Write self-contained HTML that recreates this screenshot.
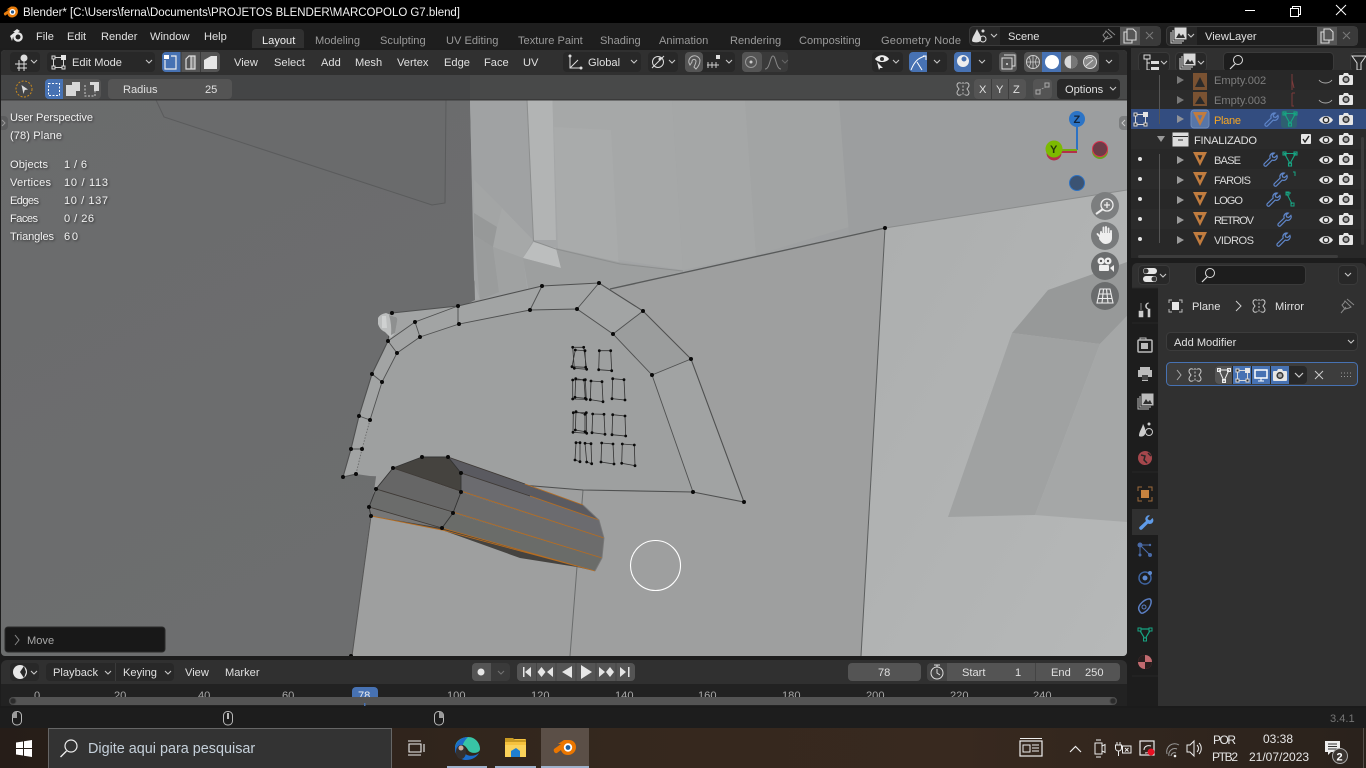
<!DOCTYPE html>
<html><head><meta charset="utf-8"><title>Blender</title>
<style>
html,body{margin:0;padding:0;background:#000;overflow:hidden}
svg{display:block;position:absolute;left:0;top:0}
text{font-family:"Liberation Sans","DejaVu Sans",sans-serif;font-size:11.1px;fill:#d8d8d8}
.m{fill:#e0e0e0}.tab{fill:#9a9a9a}
.ov{fill:#f2f2f2;font-size:11.1px;filter:drop-shadow(1px 1px 1px rgba(0,0,0,.55))}
.dim{fill:#7c7c7c}
.g{fill:#a8a8a8}
.tb{fill:#e6e6e6;font-size:12px}
</style></head><body>
<svg width="1366" height="768" viewBox="0 0 1366 768" xmlns="http://www.w3.org/2000/svg">
<defs>
<linearGradient id="task" x1="0" x2="1" y1="0" y2="0"><stop offset="0" stop-color="#261d18"/><stop offset=".45" stop-color="#35281e"/><stop offset=".7" stop-color="#38291f"/><stop offset="1" stop-color="#2a221c"/></linearGradient>
<linearGradient id="wall" x1="0" x2="1" y1="0" y2="0"><stop offset="0" stop-color="#a6a8a9"/><stop offset="1" stop-color="#989a9b"/></linearGradient>
<linearGradient id="dk" x1="0" x2="1" y1="0" y2="1"><stop offset="0" stop-color="#6a6b6c"/><stop offset="1" stop-color="#6f7071"/></linearGradient>
<linearGradient id="rp" x1="0" x2="1" y1="0" y2="1"><stop offset="0" stop-color="#acaeae"/><stop offset="1" stop-color="#b6b8b8"/></linearGradient>
<g id="eye"><path d="M0 6C3 .8 11 .8 14 6 11 11.2 3 11.2 0 6Z" fill="#e6e6e6"/><circle cx="7" cy="6" r="3.4" fill="#2a2a2a"/><circle cx="7" cy="6" r="2" fill="#e6e6e6"/></g>
<g id="cam"><path d="M1 2h3l1-2h4l1 2h3a1 1 0 0 1 1 1v8a1 1 0 0 1-1 1H1a1 1 0 0 1-1-1V3a1 1 0 0 1 1-1Z" fill="#e6e6e6"/><circle cx="7" cy="6.5" r="3.6" fill="#3a3a3a"/><circle cx="7" cy="6.5" r="2" fill="#aaa"/></g>
<path id="obj" d="M0 0H14L7 14ZM4.600 3.200 7 8.400 9.400 3.200Z" fill="#c17c3f" fill-rule="evenodd"/>
<path id="wr" d="M10.5 1A3.6 3.6 0 0 0 7.2 6L1.4 11.6A1.5 1.5 0 0 0 3.5 13.8L9.2 8.1A3.6 3.6 0 0 0 13.9 3.4L11.7 5.5 9.7 5 9.1 3.1 11.3 1.1A3.6 3.6 0 0 0 10.5 1Z" fill="none" stroke="#5f86c9" stroke-width="1.2"/>
<g id="mesh" fill="none" stroke="#17a583" stroke-width="1.1"><path d="M1.5 1.5H12.5L7 11.5Z"/><rect x="0" y="0" width="3" height="3"/><rect x="11" y="0" width="3" height="3"/><rect x="5.5" y="11" width="3" height="3"/></g>
<g id="edit" fill="none" stroke="#d8d8d8" stroke-width="1"><rect x="1.5" y="1.5" width="10" height="10"/><rect x="0" y="0" width="3" height="3" fill="#303030"/><rect x="0" y="10" width="3" height="3" fill="#303030"/><rect x="10" y="10" width="3" height="3" fill="#303030"/><rect x="9" y="-1" width="5" height="5" fill="#e6e6e6" stroke="none"/></g>
<path id="cv" d="M0 0 3 3 6 0" fill="none" stroke="#c8c8c8" stroke-width="1.1"/>
<path id="ar" d="M0 0 7 4 0 8Z" fill="#9a9a9a"/>
<g id="imgs" fill="none" stroke="#d8d8d8" stroke-width="1"><rect x="4" y="0" width="11" height="11" fill="#d8d8d8"/><path d="M5 10 8 5 10 8 12 6 14 10Z" fill="#303030" stroke="none"/><path d="M2 2V13H13M0 4V15H11"/></g>
<g id="bfly" fill="none" stroke="#c8c8c8" stroke-width="1"><path d="M5.500 1.500C3 0 1 1 1 3.500 1 5 2.500 6 3 7 2.500 8 1 9 1 10.500 1 13 3 14 5.500 12.500M8.500 1.500C11 0 13 1 13 3.500 13 5 11.500 6 11 7 11.500 8 13 9 13 10.500 13 13 11 14 8.500 12.500"/><path d="M7 0V14" stroke-dasharray="2 1.500"/></g>
<g id="cp" fill="none" stroke="#d8d8d8" stroke-width="1.1"><path d="M4 0H10L13 3V11H4Z"/><path d="M4 3H1V14H9V11"/></g>
<g id="mouse" fill="none" stroke="#b8b8b8" stroke-width="1"><rect x=".5" y=".5" width="9" height="13.5" rx="4"/></g>
</defs>

<!-- base -->
<rect width="1366" height="768" fill="#1d1d1d"/>
<rect width="1366" height="23" fill="#000"/>
<!-- title bar -->
<g transform="translate(3,5)"><path d="M1 8 6 4.5H3.5L8 1.5H10.5C13 1.5 15 3.5 15 6.5 15 10 12 12.5 9 12.5 6.500 12.500 5 11 4.500 9L2.500 10.500C1.500 11 .5 9 1 8Z" fill="#e87d0d"/><circle cx="9.500" cy="7" r="3" fill="#fff"/><circle cx="9.500" cy="7" r="1.600" fill="#26588c"/></g>
<text x="23" y="16" textLength="437" style="font-size:11.5px;fill:#f2f2f2">Blender* [C:\Users\ferna\Documents\PROJETOS BLENDER\MARCOPOLO G7.blend]</text>
<path d="M1245 10.500h10" stroke="#fff"/>
<path d="M1290.500 8.500h8v8h-8zM1292.500 8.500v-2h8v8h-2" fill="none" stroke="#fff"/>
<path d="M1336 5 1346 15M1346 5 1336 15" stroke="#fff"/>

<!-- topbar -->
<rect y="23" width="1366" height="25" fill="#1e1e1e"/>
<g transform="translate(10,29)"><circle cx="8" cy="8" r="4.800" fill="#e6e6e6"/><circle cx="8" cy="8" r="2.500" fill="#1e1e1e"/><path d="M0 7 5 3H3L7 0 10 2 7 4 3 8 2 12 1 9Z" fill="#e6e6e6"/></g>
<text class="m" x="36" y="40">File</text><text class="m" x="67" y="40">Edit</text><text class="m" x="101" y="40">Render</text><text class="m" x="150" y="40">Window</text><text class="m" x="204" y="40">Help</text>
<path d="M252 48V33a4 4 0 0 1 4-4h44a4 4 0 0 1 4 4v15Z" fill="#303030"/>
<text x="262" y="44" style="fill:#eee">Layout</text>
<text class="tab" x="315" y="44">Modeling</text><text class="tab" x="380" y="44">Sculpting</text><text class="tab" x="446" y="44">UV Editing</text><text class="tab" x="518" y="44">Texture Paint</text><text class="tab" x="600" y="44">Shading</text><text class="tab" x="659" y="44">Animation</text><text class="tab" x="730" y="44">Rendering</text><text class="tab" x="799" y="44">Compositing</text><text class="tab" x="881" y="44" textLength="80">Geometry Node</text>

<!-- scene -->
<rect x="969.500" y="26.500" width="191" height="19" rx="4" fill="#282828" stroke="#3b3b3b"/>
<rect x="1000" y="27" width="120" height="18" fill="#1d1d1d"/>
<rect x="1120" y="27" width="20" height="18" fill="#565656"/><rect x="1140" y="27" width="20" height="18" fill="#3a3a3a"/>
<path d="M972 41C972 37 975 34 977 29 979 34 982 36 981 40 980 43 973 43 972 41Z" fill="#ddd"/><circle cx="983" cy="39" r="3" fill="none" stroke="#ddd"/><circle cx="983" cy="31" r="1.500" fill="#ddd"/>
<use href="#cv" x="991" y="34"/>
<text class="m" x="1008" y="40">Scene</text>
<path d="M1103 42 1108 36M1106 31 1112 37 1110 38 1106 39 1103 35 1105 33ZM1108 29 1115 35" fill="none" stroke="#888"/>
<use href="#cp" transform="translate(1123,29)"/>
<path d="M1146 32 1153 39M1153 32 1146 39" stroke="#777" stroke-width="1.100"/>
<rect x="1166.500" y="26.500" width="191" height="19" rx="4" fill="#282828" stroke="#3b3b3b"/>
<rect x="1197" y="27" width="120" height="18" fill="#1d1d1d"/>
<rect x="1317" y="27" width="20" height="18" fill="#565656"/><rect x="1337" y="27" width="20" height="18" fill="#3a3a3a"/>
<use href="#imgs" transform="translate(1171,28)"/><use href="#cv" x="1188" y="34"/>
<text class="m" x="1205" y="40">ViewLayer</text>
<use href="#cp" transform="translate(1320,29)"/>
<path d="M1343 32 1350 39M1350 32 1343 39" stroke="#777" stroke-width="1.100"/>

<!-- viewport -->
<clipPath id="vp"><path d="M1 54a4 4 0 0 1 4-4H1123a4 4 0 0 1 4 4V652a4 4 0 0 1-4 4H5a4 4 0 0 1-4-4Z"/></clipPath>
<g clip-path="url(#vp)">
<rect x="0" y="50" width="1130" height="610" fill="url(#dk)"/>
<path d="M156 100 164 117 432 205 445 203 446 100" fill="#6a6b6c" stroke="#5a5b5c" stroke-width="1"/>
<path d="M470 100H1127V300H475Z" fill="url(#wall)"/>
<path d="M470 100H527L533 240 534 252 523 258 527 290 480 300 474 280Z" fill="#a0a2a3"/>
<path d="M474 180 502 208 533 240 497 227 493 247 474 213Z" fill="#a3a5a5"/>
<path d="M474 213 497 227 493 247 474 235Z" fill="#979999"/>
<path d="M502 208 533 240 523 258 493 247 497 227Z" fill="#a6a8a8"/>
<path d="M474 235 493 247 499 292 480 300Z" fill="#9a9c9c"/>
<path d="M493 247 523 258 527 288 499 292Z" fill="#a0a2a2"/>
<path d="M527.500 100H552.500L556 240 533.500 240Z" fill="#b2b4b4"/>
<path d="M552.500 100H672L683 270 558 250Z" fill="#a6a8a8"/>
<path d="M554 127 611 130 618.500 262 558 250Z" fill="#a9abab"/>
<path d="M672 100H745L756 255 683 270Z" fill="#a5a7a7"/>
<path d="M745 100H839L849 227 756 255Z" fill="#a2a4a4"/>
<path d="M839 100H1127V190L849 234Z" fill="#9c9e9f"/>
<path d="M533.500 242 556 248 561 268 523 258Z" fill="#bcbebe"/>
<path d="M556 248 618 262 683 271 610 290 530 300 523 258 561 268Z" fill="#9d9f9f"/>
<path d="M533.500 241 556 249 620 264 683 271" fill="none" stroke="#8d8f8f"/>
<path d="M527 100 533.500 241" stroke="#8c8e8e" fill="none"/>
<!-- lower panels -->
<path d="M475 300 610 289 885 228 861 656H352L370 520 395 340Z" fill="#9e9f9f"/>
<path d="M885 228 1127 190V656H861Z" fill="url(#rp)"/>
<path d="M1012 333 1048 290 1127 262V316L1100 344Z" fill="#979999"/>
<path d="M1012 333 1100 344 1035 515 948 517Z" fill="#a0a2a2"/>
<path d="M1100 344 1127 316V522L1035 515Z" fill="#a5a7a7"/>
<path d="M885 228 861 656" stroke="#5c5e5e" fill="none"/>
<path d="M885 228 1127 190" stroke="#8a8c8c" fill="none"/>
<path d="M610 289 885 228" stroke="#585a5a" stroke-width="1.400" fill="none"/>
<path d="M371 516 352 656" stroke="#555" fill="none"/>
<path d="M583 490 570 656" stroke="#6a6c6c" fill="none"/>
<!-- mesh -->
<path d="M392 313 458 306 542 286 599 283 643 311 691 359 744 502 693 492 583 490 460 480 370 476 356 474 343 477 372 374 388 341Z" fill="#9ea0a0"/>
<path d="M392 313 458 306 542 286 599 283 643 311 691 359 652 375 613 334 577 309 530 310 459 324 420 337 397 353 382 382 370 420 362 449 356 474 343 477 351 449 359 416 372 374 388 341Z" fill="#a2a4a4"/>
<path d="M613 334 643 311 691 359 652 375Z" fill="#9b9d9d"/>
<path d="M652 375 691 359 744 502 693 492Z" fill="#a1a3a3"/>
<g fill="none" stroke="#4f5050" stroke-width=".9">
<path d="M392 313 458 306 542 286 599 283 643 311 691 359 744 502 693 492 583 490 460 480 395 477M356 474 343 477 351 449 359 416 372 374 388 341 392 313" stroke-width="1.100"/>
<path d="M388 341 415 322 458 306M397 353 420 337 459 324 530 310 577 309 613 334 652 375 693 492M397 353 382 382 370 420"/>
<path d="M458 306V324M415 322 420 337M388 341 397 353M372 374 382 382M359 416 370 420M351 449H362M542 286 530 310M599 283 577 309M643 311 613 334M691 359 652 375"/>
<path d="M370 420 362 449 356 474" stroke-dasharray="1.500 1.500" stroke="#6a6b6b"/>
</g>
<!-- small cyl -->
<path d="M378 318Q380 314 386 313L396 317Q398 318 397 322L395 333 391 338 385 332Q380 330 378 324Z" fill="#bcbebe"/><path d="M389 315 396 317Q398 318 397 322L395 333 391 335Q392 325 389 315Z" fill="#8e9090"/><path d="M382 316H386L387 328H382Z" fill="#cfd1d1"/>
<!-- cylinder -->
<path d="M371 516 442 530 520 558 577 567 595 571 442 528 369 507Z" fill="#454340"/>
<path d="M448 457 583 505 599 520 461 473Z" fill="#5a5a60"/>
<path d="M461 473 599 520 604 538 461 492Z" fill="#6b6b6f"/>
<path d="M461 492 604 538 602 558 453 513Z" fill="#6c6c6c"/>
<path d="M453 513 602 558 595 571 442 528Z" fill="#6a6c69"/>
<path d="M393 468 422 457 448 457 461 473 461 492Z" fill="#45433f"/>
<path d="M393 468 461 492 453 513 376 489Z" fill="#666666"/>
<path d="M376 489 453 513 442 528 369 507Z" fill="#6b6c6b"/>
<path d="M369 507 442 528 371 516Z" fill="#777"/>
<g fill="none" stroke-width=".9">
<path d="M393 468 461 491M376 489 453 512M369 507 442 528M461 473 530 496M448 457 525 484" stroke="#3f3a36"/>
<path d="M461 491 604 538M453 512 602 558M442 528 595 571M530 496 599 520M525 484 583 505M371 516 442 530 595 571" stroke="#b56d22"/>
<path d="M583 505 599 520 604 538 602 558 595 571" stroke="#7a7a7a"/>
<path d="M422 457H448L461 473V492L453 513 442 528M393 468 422 457M376 489 393 468M369 507 376 489M371 516 369 507" stroke="#333"/>
</g>
<!-- windows -->
<g fill="none" stroke="#333" stroke-width=".8">
<path d="M572.700 347.300 583.700 347.300 586.700 369.300 574.300 368.300ZM575.300 350 585 350.700 585.700 367.300 572 366.700ZM599.300 350.700 610.700 350.700 611.700 370.700 598.700 369.700Z"/>
<path d="M572.700 380 585.300 379.700 586.300 399.300 572.700 399ZM575.700 378.700 584 380 585.300 398.300 575 397.300ZM591 381 602 381.700 603 401.700 590.300 399.700ZM612.700 378.700 624 379.700 625 400 612 398.700Z"/>
<path d="M573.300 412.700 586.300 412.700 586.700 433.300 573 432.300ZM576 411.700 585 414.300 585 431.700 575.300 430ZM592.700 414 604 414.300 605 434.300 592 432.700ZM612.700 414.700 625 416 625.700 436 612 434.700Z"/>
<path d="M576 442.700 580 442.700 580 461.700 575 460ZM585 443.300 591 443.700 591.700 463.700 586.700 462ZM601.700 443 613 444 614 464 601 462ZM622.300 444 634.300 445 635 465.700 621.700 463.300Z"/>
</g>
<path fill="none" stroke="#0a0a0a" stroke-width="2.800" stroke-linecap="round" d="M572.700 347.300h0M583.700 347.300h0M586.700 369.300h0M574.300 368.300h0M575.300 350h0M585 350.700h0M585.700 367.300h0M572 366.700h0M599.300 350.700h0M610.700 350.700h0M611.700 370.700h0M598.700 369.700h0M572.700 380h0M585.300 379.700h0M586.300 399.300h0M572.700 399h0M575.700 378.700h0M584 380h0M585.300 398.300h0M575 397.300h0M591 381h0M602 381.700h0M603 401.700h0M590.300 399.700h0M612.700 378.700h0M624 379.700h0M625 400h0M612 398.700h0M573.300 412.700h0M586.300 412.700h0M586.700 433.300h0M573 432.300h0M576 411.700h0M585 414.300h0M585 431.700h0M575.300 430h0M592.700 414h0M604 414.300h0M605 434.300h0M592 432.700h0M612.700 414.700h0M625 416h0M625.700 436h0M612 434.700h0M576 442.700h0M580 442.700h0M580 461.700h0M575 460h0M585 443.300h0M591 443.700h0M591.700 463.700h0M586.700 462h0M601.700 443h0M613 444h0M614 464h0M601 462h0M622.300 444h0M634.300 445h0M635 465.700h0M621.700 463.300h0"/>
<path fill="none" stroke="#0a0a0a" stroke-width="4" stroke-linecap="round" d="M885 228h0M392 313h0M458 306h0M542 286h0M599 283h0M643 311h0M691 359h0M744 502h0M693 492h0M652 375h0M613 334h0M577 309h0M530 310h0M459 324h0M420 337h0M415 322h0M388 341h0M397 353h0M382 382h0M372 374h0M370 420h0M359 416h0M362 449h0M351 449h0M356 474h0M343 477h0M422 457h0M448 457h0M461 473h0M461 492h0M453 513h0M442 528h0M393 468h0M376 489h0M369 507h0M371 516h0M351 656h0"/>
<circle cx="655.500" cy="565.500" r="25" fill="none" stroke="#fff" stroke-width="1.100"/>
<!-- overlay text -->
<text class="ov" x="10" y="121" textLength="83">User Perspective</text><text class="ov" x="10" y="139" textLength="52">(78) Plane</text>
<text class="ov" x="10" y="168" textLength="38">Objects</text><text class="ov" x="64" y="168" textLength="23">1 / 6</text>
<text class="ov" x="10" y="186" textLength="41">Vertices</text><text class="ov" x="64" y="186" textLength="44">10 / 113</text>
<text class="ov" x="10" y="204" textLength="29">Edges</text><text class="ov" x="64" y="204" textLength="44">10 / 137</text>
<text class="ov" x="10" y="222" textLength="28">Faces</text><text class="ov" x="64" y="222" textLength="30">0 / 26</text>
<text class="ov" x="10" y="240" textLength="44">Triangles</text><text class="ov" x="64" y="240" textLength="14">60</text>
<!-- side arrows -->
<path d="M0 116H4a4 4 0 0 1 4 4V126a4 4 0 0 1-4 4H0Z" fill="#5c5d5e"/><path d="M2 120 5 123 2 126" stroke="#999" fill="none"/>
<path d="M1127 116H1123a4 4 0 0 0-4 4V126a4 4 0 0 0 4 4H1127Z" fill="#7c7e7f"/><path d="M1125 120 1122 123 1125 126" stroke="#ccc" fill="none"/>
<!-- gizmo -->
<path d="M1077 119V150" stroke="#2c72c4" stroke-width="2"/><path d="M1054 152H1077" stroke="#b3304a" stroke-width="2"/><path d="M1054 150H1077" stroke="#76ab10" stroke-width="2"/>
<circle cx="1054" cy="153" r="7.500" fill="#b3304a"/><circle cx="1100" cy="151" r="8" fill="#6aa020"/>
<circle cx="1100" cy="149" r="7.500" fill="#6d3c47" stroke="#e0304f" stroke-width="1"/>
<circle cx="1077" cy="183" r="7.500" fill="#3b5373" stroke="#2c72c4" stroke-width="1"/>
<circle cx="1077" cy="119" r="8" fill="#2c74c6"/><circle cx="1054" cy="149" r="8.500" fill="#7cba00"/>
<text x="1073.500" y="123" style="font-size:11px;font-weight:bold;fill:#11243a">Z</text><text x="1050" y="153" style="font-size:11px;font-weight:bold;fill:#26360a">Y</text>
<!-- nav -->
<g fill="#6a6c6d"><circle cx="1105" cy="206" r="14" fill="#7c7e7f"/><circle cx="1105" cy="236" r="14" fill="#787a7b"/><circle cx="1105" cy="266" r="14"/><circle cx="1105" cy="296" r="14"/></g>
<g fill="none" stroke="#eee" stroke-width="1.300"><circle cx="1107" cy="205" r="6"/><path d="M1103 209 1096 214" stroke-width="2"/><path d="M1104 205H1110M1107 202V208"/></g>
<path d="M1101 238V232M1103.500 234V227.500M1106 234V227M1108.500 234V228.500M1111 236V231M1101 238 1097.500 234" stroke="#eee" stroke-width="1.900" stroke-linecap="round" fill="none"/><path d="M1100 233H1112V238C1112 242 1109 244 1105.500 244 1103 244 1101 242 1099 239Z" fill="#eee"/>
<g fill="#eee"><circle cx="1101" cy="261" r="3.500"/><circle cx="1108" cy="261" r="3.500"/><rect x="1099" y="265" width="10" height="6" rx="1"/><path d="M1110 268 1114 265V272Z"/></g><circle cx="1101" cy="261" r="1.200" fill="#555"/><circle cx="1108" cy="261" r="1.200" fill="#555"/>
<path d="M1100 289H1110L1113 303H1097ZM1098.500 294H1111.500M1097.500 298.500H1112.500M1103.500 289 1102 303M1106.500 289 1108 303" fill="none" stroke="#eee" stroke-width="1.100"/>
<!-- move panel -->
<rect x="5" y="627" width="160" height="25" rx="3" fill="#181818" stroke="#2a2a2a"/>
<path d="M15 635 19 640 15 645" fill="none" stroke="#888"/>
<text x="27" y="644" style="fill:#a8a8a8">Move</text>
<!-- tool header -->
<rect x="0" y="75" width="1127" height="25" fill="#444546"/>
<rect x="470" y="75" width="657" height="25" fill="#484949"/>
<rect y="99" width="1127" height="1.500" fill="#3a3a3a"/>
<rect x="1" y="50" width="1126" height="25" fill="#303030"/>
</g>
<!-- viewport header -->
<g>
<rect x="10" y="52" width="30" height="20" rx="4" fill="#282828"/>
<path d="M15 64H27M17 68H27M19 60V71M24 60V71" stroke="#ddd" stroke-width="1"/><circle cx="24" cy="58" r="3.500" fill="#ddd"/><use href="#cv" x="31" y="60"/>
<rect x="47" y="52" width="108" height="20" rx="4" fill="#282828"/>
<use href="#edit" transform="translate(52,56)"/><text class="m" x="72" y="66">Edit Mode</text><use href="#cv" x="146" y="60"/>
<rect x="162" y="52" width="58" height="20" rx="4" fill="#545454"/>
<path d="M166 52H181V72H166a4 4 0 0 1-4-4V56a4 4 0 0 1 4-4Z" fill="#4772b3"/>
<path d="M200.500 52V72M181 52V72" stroke="#3a3a3a"/>
<path d="M165 60V69H176V56H171" fill="none" stroke="#eee" stroke-width="1.200"/><rect x="164" y="55" width="5" height="4" fill="#fff"/>
<path d="M186 59V69H195V56H189ZM191 56V69" fill="none" stroke="#ddd" stroke-width="1.200"/><rect x="191" y="56" width="4" height="13" fill="#ddd" opacity=".4"/>
<path d="M204 60 211 56H217V69H204Z" fill="#e6e6e6"/>
<text class="m" x="234" y="66">View</text><text class="m" x="274" y="66">Select</text><text class="m" x="321" y="66">Add</text><text class="m" x="355" y="66">Mesh</text><text class="m" x="397" y="66">Vertex</text><text class="m" x="444" y="66">Edge</text><text class="m" x="484" y="66">Face</text><text class="m" x="523" y="66">UV</text>
<rect x="563" y="52" width="78" height="20" rx="4" fill="#282828"/>
<path d="M570 56V68H581M570 68 578 60" fill="none" stroke="#ddd"/><circle cx="570" cy="56" r="1.500" fill="#ddd"/><circle cx="581" cy="68" r="1.500" fill="#ddd"/><text class="m" x="588" y="66">Global</text><use href="#cv" x="631" y="60"/>
<rect x="648" y="52" width="30" height="20" rx="4" fill="#282828"/>
<circle cx="658" cy="62" r="5.500" fill="none" stroke="#ddd"/><circle cx="660" cy="59" r="1.500" fill="#ddd"/><path d="M652 68 664 56" stroke="#ddd"/><use href="#cv" x="669" y="60"/>
<rect x="685" y="52" width="50" height="20" rx="4" fill="#282828"/><rect x="685" y="52" width="18" height="20" rx="4" fill="#545454"/>
<path d="M689 63A5.500 5.500 0 0 1 700 60C700 64 698 67 696 69L694 67C695 65 696 63 696 61A2 2 0 0 0 692 62L690 65Z" fill="none" stroke="#bbb"/>
<path d="M707 65H719M708 62V68M712 62V68M716 62V68" stroke="#ccc"/><rect x="716" y="55" width="4" height="4" fill="#ddd"/><use href="#cv" x="726" y="60"/>
<rect x="742" y="52" width="46" height="20" rx="4" fill="#3a3a3a"/><rect x="742" y="52" width="20" height="20" rx="4" fill="#545454"/>
<circle cx="751" cy="62" r="5.500" fill="none" stroke="#999"/><circle cx="751" cy="62" r="1.500" fill="#ccc"/>
<path d="M765 69C770 69 770 56 773 56 776 56 776 69 781 69" fill="none" stroke="#888"/><path d="M782 60 785 63 788 60" fill="none" stroke="#666"/>
<!-- right -->
<rect x="872" y="52" width="31" height="20" rx="4" fill="#282828"/>
<path d="M875 59C878 54 886 54 889 59 886 63 878 63 875 59Z" fill="#eee"/><circle cx="882" cy="59" r="2" fill="#333"/><path d="M877 62 883 68 880 68 879 70Z" fill="#eee"/><use href="#cv" x="893" y="60"/>
<rect x="909" y="52" width="38" height="20" rx="4" fill="#282828"/><path d="M913 52H927V72H913a4 4 0 0 1-4-4V56a4 4 0 0 1 4-4Z" fill="#4772b3"/>
<path d="M911 70C915 60 919 58 925 56M923 56H926V60M917 62 922 70" fill="none" stroke="#fff"/><use href="#cv" x="934" y="60"/>
<rect x="954" y="52" width="38" height="20" rx="4" fill="#282828"/><path d="M958 52H971V72H958a4 4 0 0 1-4-4V56a4 4 0 0 1 4-4Z" fill="#4772b3"/>
<circle cx="963" cy="61" r="6" fill="#eee"/><circle cx="964" cy="59" r="2.500" fill="#4772b3"/><path d="M958 66 962 68" stroke="#4772b3"/><use href="#cv" x="979" y="60"/>
<rect x="999" y="52" width="18" height="20" rx="4" fill="#545454"/><path d="M1004 55H1015V66H1012M1002 58H1012V69H1002Z" fill="none" stroke="#ddd"/><circle cx="1007" cy="64" r="1" fill="#ddd"/>
<rect x="1024" y="52" width="95" height="20" rx="4" fill="#282828"/><rect x="1024" y="52" width="75" height="20" rx="4" fill="#545454"/><rect x="1042" y="52" width="19" height="20" fill="#4772b3"/>
<circle cx="1033" cy="62" r="6.500" fill="none" stroke="#ccc"/><path d="M1026.500 62H1039.500M1033 55.500V68.500M1029 57C1031 60 1031 64 1029 67M1037 57C1035 60 1035 64 1037 67" fill="none" stroke="#ccc" stroke-width=".8"/>
<circle cx="1052" cy="62" r="7" fill="#fff"/>
<circle cx="1071" cy="62" r="6.500" fill="#d8d8d8"/><path d="M1071 55.500A6.500 6.500 0 0 1 1071 68.500Z" fill="#777"/>
<circle cx="1090" cy="62" r="6.500" fill="#888" stroke="#ddd"/><path d="M1086 59C1088 57 1090 57 1092 58M1086 66 1093 60" stroke="#ddd" fill="none"/>
<use href="#cv" x="1106" y="60"/>
<!-- tool header items -->
<circle cx="24" cy="89" r="8" fill="none" stroke="#c98a1e" stroke-dasharray="2 1.500"/><path d="M21.500 85 28 89.500 24.700 90 23.500 94Z" fill="#ddd"/>
<rect x="45" y="79" width="56" height="20" rx="4" fill="#545454"/><path d="M49 79H63V99H49a4 4 0 0 1-4-4V83a4 4 0 0 1 4-4Z" fill="#4772b3"/>
<rect x="48.500" y="83.500" width="11" height="12" fill="none" stroke="#fff" stroke-dasharray="2 1.500"/>
<path d="M66 85H72V82H80V91H76V96H66Z" fill="#d8d8d8"/>
<path d="M85 85V96H95V91" fill="none" stroke="#ccc" stroke-dasharray="2 1.500"/><path d="M90 82H99V91H94V85H90Z" fill="#d8d8d8"/>
<rect x="108" y="79" width="124" height="20" rx="4" fill="#545454"/>
<text class="m" x="123" y="93">Radius</text><text class="m" x="205" y="93">25</text>
<use href="#bfly" transform="translate(956,82)" opacity=".9"/>
<rect x="974" y="79" width="52" height="20" rx="4" fill="#545454"/><path d="M991.500 79V99M1008.500 79V99" stroke="#3c3c3c"/>
<text class="m" x="979" y="93">X</text><text class="m" x="996" y="93">Y</text><text class="m" x="1013" y="93">Z</text>
<rect x="1033" y="79" width="19" height="20" rx="4" fill="#545454"/><rect x="1036" y="90" width="4" height="4" fill="none" stroke="#aaa"/><rect x="1045" y="83" width="4" height="4" fill="none" stroke="#aaa"/><path d="M1039 90 1046 87" stroke="#999" stroke-dasharray="2 1" fill="none"/>
<rect x="1057" y="79" width="63" height="20" rx="4" fill="#282828"/><text class="m" x="1065" y="93">Options</text><use href="#cv" x="1110" y="87"/>
</g>

<!-- outliner -->
<rect x="1131" y="48" width="235" height="210" fill="#282828"/>
<rect x="1131" y="48" width="235" height="22" fill="#303030"/>
<rect x="1138.500" y="52.500" width="31" height="19" rx="4" fill="#282828" stroke="#3a3a3a"/>
<path d="M1144 55H1150V59H1144ZM1147 59V70H1150M1147 63H1150" fill="none" stroke="#ddd"/><rect x="1151" y="61" width="8" height="3" fill="#ddd"/><rect x="1151" y="67" width="8" height="3" fill="#ddd"/><use href="#cv" x="1161" y="61"/>
<rect x="1175.500" y="52.500" width="31" height="19" rx="4" fill="#282828" stroke="#3a3a3a"/>
<use href="#imgs" transform="translate(1180,54)"/><use href="#cv" x="1198" y="61"/>
<rect x="1223.500" y="52.500" width="110" height="19" rx="4" fill="#1d1d1d" stroke="#3a3a3a"/>
<circle cx="1238" cy="60" r="4.500" fill="none" stroke="#ddd"/><path d="M1235 64 1230 69" stroke="#ddd" stroke-width="1.200"/>
<rect x="1350.500" y="52.500" width="20" height="19" rx="4" fill="#282828" stroke="#3a3a3a"/><path d="M1352 56H1366L1361 63V70H1357V63Z" fill="none" stroke="#ddd"/>
<rect x="1131" y="70" width="235" height="20" fill="#282828"/><rect x="1131" y="90" width="235" height="20" fill="#2b2b2b"/>
<rect x="1131" y="109" width="235" height="20" fill="#334d80"/>
<rect x="1131" y="129" width="235" height="20" fill="#2b2b2b"/><rect x="1131" y="149" width="235" height="20" fill="#282828"/><rect x="1131" y="169" width="235" height="20" fill="#2b2b2b"/><rect x="1131" y="189" width="235" height="20" fill="#282828"/><rect x="1131" y="209" width="235" height="20" fill="#2b2b2b"/><rect x="1131" y="229" width="235" height="20" fill="#282828"/>
<path d="M1159.500 75V124M1159.500 154V243" stroke="#555"/>
<use href="#ar" x="1177" y="76" opacity=".7"/><use href="#ar" x="1177" y="96" opacity=".7"/><use href="#ar" x="1177" y="115" style="opacity:.9"/><path d="M1157 136H1165L1161 142Z" fill="#999"/>
<use href="#ar" x="1177" y="156"/><use href="#ar" x="1177" y="176"/><use href="#ar" x="1177" y="196"/><use href="#ar" x="1177" y="216"/><use href="#ar" x="1177" y="236"/>
<path d="M1193 73H1207V90H1193Z" fill="#7a5232"/><path d="M1195 87 1200 77 1205 87Z" fill="#2a2a2a"/>
<path d="M1193 92H1207V106H1193Z" fill="#7a5232"/><path d="M1195 104 1200 96 1205 104Z" fill="#2a2a2a"/>
<text class="dim" x="1214" y="84">Empty.002</text><text class="dim" x="1214" y="104">Empty.003</text>
<path d="M1292 74V90M1292 80 1294 88M1292 93V106H1294M1292 93H1295" stroke="#7c3b3b" fill="none"/>
<path d="M1319 80C1322 84 1329 84 1332 80M1319 100C1322 104 1329 104 1332 100" fill="none" stroke="#aaa"/>
<use href="#cam" transform="translate(1339,73)"/><use href="#cam" transform="translate(1339,93)"/>
<use href="#edit" transform="translate(1134,113)"/>
<rect x="1191" y="110" width="18" height="18" rx="3" fill="#5776a8" stroke="#6e8ab8"/><use href="#obj" x="1193" y="112"/>
<text x="1214" y="124" textLength="27" style="fill:#f5a623">Plane</text>
<use href="#wr" x="1264" y="112"/>
<rect x="1281" y="110" width="16" height="18" rx="3" fill="#2e6070"/><use href="#mesh" x="1283" y="112"/>
<use href="#eye" x="1319" y="114"/><use href="#cam" transform="translate(1339,113)"/>
<path d="M1173 133V146H1188V133ZM1173 136H1188" fill="#ddd" stroke="#ddd"/><path d="M1173 136.500H1188M1178 140H1183" stroke="#2b2b2b"/>
<text class="m" x="1194" y="144" textLength="63">FINALIZADO</text>
<rect x="1301" y="134" width="10" height="10" rx="1" fill="#e6e6e6"/><path d="M1303 139 1305 142 1309 136" stroke="#222" stroke-width="1.400" fill="none"/>
<use href="#eye" x="1319" y="134"/><use href="#cam" transform="translate(1339,133)"/>
<g fill="#e6e6e6"><circle cx="1140" cy="159" r="2"/><circle cx="1140" cy="179" r="2"/><circle cx="1140" cy="199" r="2"/><circle cx="1140" cy="219" r="2"/><circle cx="1140" cy="239" r="2"/></g>
<use href="#obj" x="1193" y="152"/><use href="#obj" x="1193" y="172"/><use href="#obj" x="1193" y="192"/><use href="#obj" x="1193" y="212"/><use href="#obj" x="1193" y="232"/>
<text x="1214" y="164" textLength="27">BASE</text><text x="1214" y="184" textLength="37">FAROIS</text><text x="1214" y="204" textLength="29">LOGO</text><text x="1214" y="224" textLength="40">RETROV</text><text x="1214" y="244" textLength="40">VIDROS</text>
<use href="#wr" x="1263" y="152"/><use href="#wr" x="1273" y="172"/><use href="#wr" x="1266" y="192"/><use href="#wr" x="1277" y="212"/><use href="#wr" x="1276" y="232"/>
<use href="#mesh" x="1283" y="152"/>
<path d="M1293 172H1295V176" stroke="#17a583" fill="none"/>
<path d="M1286 193H1291M1287 194 1292 204" stroke="#17a583" fill="none"/><rect x="1286" y="192" width="3" height="3" fill="none" stroke="#17a583"/><rect x="1291" y="203" width="3" height="3" fill="none" stroke="#17a583"/>
<use href="#eye" x="1319" y="154"/><use href="#eye" x="1319" y="174"/><use href="#eye" x="1319" y="194"/><use href="#eye" x="1319" y="214"/><use href="#eye" x="1319" y="234"/>
<use href="#cam" transform="translate(1339,153)"/><use href="#cam" transform="translate(1339,173)"/><use href="#cam" transform="translate(1339,193)"/><use href="#cam" transform="translate(1339,213)"/><use href="#cam" transform="translate(1339,233)"/>
<rect x="1361" y="137" width="3" height="108" rx="1.500" fill="#3c3c3c"/>
<rect x="1138" y="255" width="200" height="3" rx="1.500" fill="#3c3c3c"/>
<rect x="1129" y="258" width="237" height="4" fill="#1d1d1d"/>

<!-- properties -->
<path d="M1132 268a5 5 0 0 1 5-5H1361a5 5 0 0 1 5 5V706H1132Z" fill="#303030"/>
<rect x="1132" y="288" width="26" height="418" fill="#1d1d1d"/>
<rect x="1138.500" y="265.500" width="31" height="19" rx="4" fill="#282828" stroke="#3a3a3a"/>
<rect x="1143" y="268" width="14" height="6" rx="3" fill="#e6e6e6"/><rect x="1143" y="276" width="14" height="6" rx="3" fill="#e6e6e6"/><circle cx="1146" cy="271" r="2.500" fill="#333"/><circle cx="1154" cy="279" r="2.500" fill="#333"/><use href="#cv" x="1160" y="274"/>
<rect x="1195.500" y="265.500" width="110" height="19" rx="4" fill="#1d1d1d" stroke="#3a3a3a"/>
<circle cx="1210" cy="273" r="4.500" fill="none" stroke="#ddd"/><path d="M1207 277 1202 282" stroke="#ddd" stroke-width="1.200"/>
<rect x="1338.500" y="265.500" width="19" height="19" rx="4" fill="#282828" stroke="#3a3a3a"/><use href="#cv" x="1345" y="273"/>
<!-- tab icons -->
<path d="M1132 509h26v26h-26a0 0 0 0 1 0 0Z" fill="#303030"/>
<path d="M1132 288h26M1132 323h26M1132 472h26M1132 676h26" stroke="#282828"/>
<path d="M1141 303V310M1139 311H1143V317H1139ZM1149 303A3 3 0 0 0 1150 309V317H1148V309A3 3 0 0 1 1149 303Z" fill="#ccc" stroke="#ccc" stroke-width=".6"/>
<rect x="1138" y="340" width="14" height="12" rx="1" fill="none" stroke="#bbb" stroke-width="1.500"/><rect x="1141" y="343" width="7" height="6" fill="#bbb"/><path d="M1140 340V338H1146V340" stroke="#bbb" fill="none"/>
<path d="M1140 367H1150V370H1152V377H1148V381H1142V377H1138V370H1140Z" fill="#bbb"/><rect x="1142" y="375" width="6" height="5" fill="#444"/>
<use href="#imgs" transform="translate(1138,394)" opacity=".85"/>
<path d="M1139 436C1139 431 1142 429 1143 424 1145 428 1146 430 1145 434 1144 437 1140 437 1139 436Z" fill="#ccc"/><circle cx="1149" cy="432" r="3.500" fill="none" stroke="#ccc"/><circle cx="1149" cy="424" r="1.500" fill="#ccc"/>
<circle cx="1145" cy="458" r="6.500" fill="#a5474c" stroke="#a5474c"/><path d="M1141 455 1145 456 1144 460 1147 463M1148 453 1151 456" stroke="#282828" stroke-width="1.500" fill="none"/>
<path d="M1138 491V487H1142M1148 487H1152V491M1138 497V501H1142M1148 501H1152V497" fill="none" stroke="#a06a3a"/><rect x="1141" y="490" width="8" height="8" fill="#c4813f"/>
<path d="M1150 515.500A3.600 3.600 0 0 0 1146 521L1139.500 527A1.800 1.800 0 0 0 1142 529.500L1148 523.500A3.600 3.600 0 0 0 1152.500 518L1150 520.500 1148 519.500 1147.500 518Z" fill="#5f9be8"/>
<g fill="#4a6ba8"><circle cx="1140" cy="545" r="2.500"/><circle cx="1140" cy="555" r="1.500"/><circle cx="1150" cy="555" r="2"/><circle cx="1150" cy="545" r="1.200"/></g><path d="M1140 545 1150 555M1140 545V555M1140 545H1150" stroke="#4a6ba8"/>
<circle cx="1145" cy="578" r="6" fill="none" stroke="#3e639f" stroke-width="1.500"/><circle cx="1145" cy="578" r="2.500" fill="#5e8ad0"/><circle cx="1150" cy="573" r="2" fill="#5e8ad0"/>
<path d="M1139 610C1137 605 1146 598 1150 599 1153 601 1150 610 1143 613 1141 614 1140 612 1139 610Z" fill="none" stroke="#5b7fc4" stroke-width="1.500"/><circle cx="1144" cy="607" r="2" fill="none" stroke="#5b7fc4"/>
<path d="M1139 629H1151L1145 639Z" fill="none" stroke="#17a583" stroke-width="1.200"/><g fill="#1d1d1d" stroke="#17a583"><rect x="1138" y="628" width="3" height="3"/><rect x="1149" y="628" width="3" height="3"/><rect x="1143.500" y="638" width="3" height="3"/></g>
<circle cx="1145" cy="662" r="7" fill="#c26a6f"/><path d="M1145 655V662H1138A7 7 0 0 1 1145 655ZM1145 662H1152A7 7 0 0 1 1145 669Z" fill="#291e1e"/>
<!-- breadcrumbs -->
<path d="M1169 303V300H1172M1179 300H1182V303M1169 309V312H1172M1179 312H1182V309" fill="none" stroke="#bbb"/><rect x="1172" y="302" width="7" height="8" fill="#e6e6e6"/>
<text class="m" x="1192" y="310">Plane</text>
<path d="M1236 301 1241 306 1236 311" fill="none" stroke="#ccc"/>
<use href="#bfly" transform="translate(1252,299)"/><text class="m" x="1275" y="310">Mirror</text>
<path d="M1341 313 1346 307M1345 301 1351 307 1349 308 1345 309 1342 305 1344 303ZM1347 299 1354 305" fill="none" stroke="#888"/>
<rect x="1166.500" y="332.500" width="191" height="18" rx="4" fill="#282828" stroke="#3c3c3c"/>
<text class="m" x="1174" y="346">Add Modifier</text><use href="#cv" x="1348" y="340"/>
<rect x="1166.500" y="362.500" width="191" height="23" rx="4" fill="#3d3d3d" stroke="#4772b3"/>
<path d="M1177 370 1181 375 1177 380" fill="none" stroke="#aaa"/>
<use href="#bfly" transform="translate(1188,368)"/>
<rect x="1215" y="366" width="92" height="18" rx="4" fill="#282828"/>
<path d="M1219 366H1232V384H1219a4 4 0 0 1-4-4V370a4 4 0 0 1 4-4Z" fill="#545454"/>
<rect x="1233" y="366" width="18" height="18" fill="#4772b3"/><rect x="1252" y="366" width="18" height="18" fill="#4772b3"/><rect x="1271" y="366" width="18" height="18" fill="#4772b3"/>
<g fill="none" stroke="#eee"><path d="M1219 370H1229L1224 381Z"/><rect x="1217.500" y="368.500" width="3" height="3"/><rect x="1227.500" y="368.500" width="3" height="3"/><rect x="1222.500" y="379.500" width="3" height="3"/></g>
<use href="#edit" transform="translate(1236,369)"/>
<rect x="1255" y="370" width="12" height="8" fill="none" stroke="#fff" stroke-width="1.500"/><path d="M1258 381H1264M1261 378V381" stroke="#fff"/>
<use href="#cam" transform="translate(1273,369)"/>
<path d="M1295 373 1299 377 1303 373" fill="none" stroke="#ccc" stroke-width="1.200"/>
<path d="M1315 371 1323 379M1323 371 1315 379" stroke="#ccc"/>
<path d="M1341 373h12M1341 376.500h12" stroke="#999" stroke-dasharray="1 2"/>

<!-- timeline -->
<path d="M1 666a6 6 0 0 1 6-6H1121a6 6 0 0 1 6 6V684H1Z" fill="#303030"/>
<rect x="1" y="684" width="1126" height="22" fill="#222"/>
<rect x="10" y="663" width="29" height="18" rx="4" fill="#282828"/>
<circle cx="20" cy="672" r="7" fill="#e6e6e6"/><path d="M20 672 24 666 26 672 24 678Z" fill="#282828"/><use href="#cv" x="31" y="671"/>
<rect x="46" y="663" width="128" height="18" rx="4" fill="#282828"/><path d="M115.500 663V681" stroke="#3a3a3a"/>
<text class="m" x="53" y="676">Playback</text><use href="#cv" x="105" y="671"/><text class="m" x="123" y="676">Keying</text><use href="#cv" x="165" y="671"/>
<text class="m" x="185" y="676">View</text><text class="m" x="225" y="676">Marker</text>
<rect x="472" y="663" width="38" height="18" rx="4" fill="#3a3a3a"/><path d="M476 663H491V681H476a4 4 0 0 1-4-4V667a4 4 0 0 1 4-4Z" fill="#545454"/><circle cx="481" cy="672" r="3.500" fill="#e6e6e6"/><use href="#cv" x="498" y="671" opacity=".4"/>
<rect x="517" y="663" width="118" height="18" rx="4" fill="#545454"/>
<path d="M536.500 663V681M556 663V681M576 663V681M596 663V681M616 663V681" stroke="#444"/>
<g fill="#e6e6e6"><path d="M523 667h1.500v10H523ZM531 667V677L525 672Z"/><path d="M537.500 672 541.500 667 545.500 672 541.500 677ZM553 667V677L547 672Z"/><path d="M572 666V678L562 672Z"/><path d="M581 665V679L592 672Z"/><path d="M599 667V677L605 672ZM606 672 610 667 614 672 610 677Z"/><path d="M620 667V677L626 672ZM628 667h1.500v10H628Z"/></g>
<rect x="848" y="663" width="73" height="18" rx="4" fill="#545454"/><text class="m" x="878" y="676">78</text>
<path d="M951 663H1116a4 4 0 0 1 4 4V677a4 4 0 0 1-4 4H947V663Z" fill="#545454"/>
<path d="M927 667a4 4 0 0 1 4-4H947V681H931a4 4 0 0 1-4-4Z" fill="#444"/><circle cx="937" cy="673" r="6" fill="none" stroke="#ddd"/><path d="M934 665H940M937 669V673L940 675M937 665V667" stroke="#ddd" fill="none"/>
<path d="M1035.500 663V681" stroke="#444"/>
<text class="m" x="962" y="676">Start</text><text class="m" x="1015" y="676">1</text>
<text class="m" x="1051" y="676">End</text><text class="m" x="1085" y="676">250</text>
<text class="g" x="34" y="699">0</text><text class="g" x="114" y="699">20</text><text class="g" x="198" y="699">40</text><text class="g" x="282" y="699">60</text><text class="g" x="366" y="699">80</text><text class="g" x="447" y="699">100</text><text class="g" x="531" y="699">120</text><text class="g" x="615" y="699">140</text><text class="g" x="698" y="699">160</text><text class="g" x="782" y="699">180</text><text class="g" x="866" y="699">200</text><text class="g" x="950" y="699">220</text><text class="g" x="1033" y="699">240</text>
<path d="M352 699V691a4 4 0 0 1 4-4H374a4 4 0 0 1 4 4V699Z" fill="#4772b3"/>
<text x="358" y="699" style="fill:#eee">78</text>
<rect x="9" y="697" width="1108" height="8" rx="4" fill="#545454"/>
<circle cx="13" cy="701" r="3" fill="#2b2b2b" stroke="#444"/><circle cx="1113" cy="701" r="3" fill="#2b2b2b" stroke="#444"/>
<rect x="364" y="703" width="1.500" height="5" fill="#4772b3"/>
<rect y="706" width="1366" height="2" fill="#1b1b1b"/>

<!-- status -->
<rect y="708" width="1366" height="20" fill="#1d1d1d"/>
<use href="#mouse" x="12" y="711"/><path d="M12.500 718V715A4 4 0 0 1 17 711.500V718Z" fill="#999"/>
<use href="#mouse" x="223" y="711"/><rect x="227" y="713" width="2" height="6" fill="#bbb"/>
<use href="#mouse" x="434" y="711"/><path d="M439 711.500A4 4 0 0 1 443.500 715V718H439Z" fill="#999"/>
<text x="1330" y="722" style="fill:#757575">3.4.1</text>

<!-- taskbar -->
<rect y="728" width="1366" height="40" fill="url(#task)"/>
<g fill="#fff"><path d="M16 742.500 23 741.500V748H16ZM24 741.300 32 740V748H24ZM16 749H23V755.500L16 754.500ZM24 749H32V757L24 755.700Z"/></g>
<rect x="48.500" y="728.500" width="343" height="40" fill="#333" stroke="#666"/>
<circle cx="71" cy="746" r="6" fill="none" stroke="#eee" stroke-width="1.200"/><path d="M66.500 751 60.500 757" stroke="#eee" stroke-width="1.300"/>
<text x="88" y="753" style="font-size:14.400px;fill:#c5d0da">Digite aqui para pesquisar</text>
<path d="M409 744H421V752H409ZM408 741H421M408 755H421M424 744V752" fill="none" stroke="#eee" stroke-width="1.100"/>
<g><path d="M455 748C455 740 463 737 468 737 476 737 480 744 480 749 480 754 470 754 468 750 466 746 462 743 458 745 456 746 455 748 455 748Z" fill="#38c4a5"/><path d="M468 737C461 737 455 742 455 749 455 756 461 760 466 760 472 760 477 757 479 753 474 757 466 757 463 751 461 746 464 741 468 737Z" fill="#1c6cc9"/><ellipse cx="461" cy="752" rx="5" ry="7" fill="#34302f"/><circle cx="461" cy="748" r="2.500" fill="#c9a99a"/></g>
<rect x="447" y="766" width="40" height="2" fill="#9fb2cc"/>
<rect x="505" y="739" width="21" height="18" rx="1" fill="#f5c23e"/><path d="M505 742V738H513L515 740H526V742Z" fill="#c99a22"/><rect x="505" y="745" width="21" height="12" fill="#fad25a"/><path d="M511 757V751L516 748 520 751V757Z" fill="#1f7fd1"/>
<rect x="495" y="766" width="41" height="2" fill="#9fb2cc"/>
<rect x="541" y="728" width="48" height="40" fill="#5b4f47"/>
<g transform="translate(554,739)"><path d="M0 10 7 5H4L10 1H15C19 1 22 4 22 8 22 13 18 16 14 16 10 16 8 14 7 11L3 14C1 15 -1 12 0 10Z" fill="#ea7600"/><circle cx="14" cy="8.500" r="4.200" fill="#fff"/><circle cx="14" cy="8.500" r="2.400" fill="#1f5f9c"/></g>
<rect x="541" y="766" width="48" height="2" fill="#9fb2cc"/>
<!-- tray -->
<rect x="1020" y="741" width="22" height="15" fill="none" stroke="#eee" stroke-width="1.200"/><rect x="1023" y="745" width="7" height="7" fill="none" stroke="#eee"/><path d="M1032 745H1039M1032 748H1039M1032 751H1039M1020 738.500H1042" stroke="#eee"/>
<path d="M1070 752 1075.500 746.500 1081 752" fill="none" stroke="#eee" stroke-width="1.200"/>
<path d="M1095 743H1102V754H1095ZM1102 746 1105 744.500V752.500L1102 751ZM1096 740H1101M1096 757H1101" fill="none" stroke="#eee"/>
<path d="M1117 742V745M1120 742V745M1115.500 745H1121.500V748C1121.500 750 1120 751 1118.500 751 1117 751 1115.500 750 1115.500 748ZM1118.500 751V756M1122.500 746H1131V753H1122.500ZM1125 748 1128.500 751.500M1128.500 748 1125 751.500" fill="none" stroke="#eee"/>
<rect x="1140" y="741" width="14" height="14" fill="none" stroke="#eee" stroke-width="1.200"/><path d="M1144 750C1144 746 1148 745 1151 746M1150 750C1150 753 1146 753 1145 753" fill="none" stroke="#eee"/><circle cx="1151" cy="752" r="3.500" fill="#e81123"/>
<g fill="none" stroke="#9a9a9a"><path d="M1167 754A8 8 0 0 1 1179 745M1169 756A6 6 0 0 1 1177 749M1171 756A3.500 3.500 0 0 1 1176 753"/></g><circle cx="1175" cy="756" r="1.300" fill="#eee"/>
<path d="M1187 745H1190L1194 741V756L1190 752H1187ZM1197 745C1199 747 1199 750 1197 752M1199 743C1202 746 1202 751 1199 754" fill="none" stroke="#eee"/>
<text class="tb" x="1213" y="744" textLength="23">POR</text><text class="tb" x="1212" y="761" textLength="26">PTB2</text>
<text class="tb" x="1263" y="743">03:38</text><text class="tb" x="1249" y="761">21/07/2023</text>
<path d="M1325 741H1340V752H1331L1328 755V752H1325Z" fill="#eee"/><path d="M1328 744H1337M1328 746.500H1337M1328 749H1337" stroke="#333"/>
<circle cx="1340" cy="756" r="7.500" fill="#3b3531" stroke="#aaa"/><text x="1336.500" y="760.500" style="font-size:11px;font-weight:bold;fill:#fff">2</text>
<path d="M1363.500 728V768" stroke="#55504b"/>
</svg>
</body></html>
